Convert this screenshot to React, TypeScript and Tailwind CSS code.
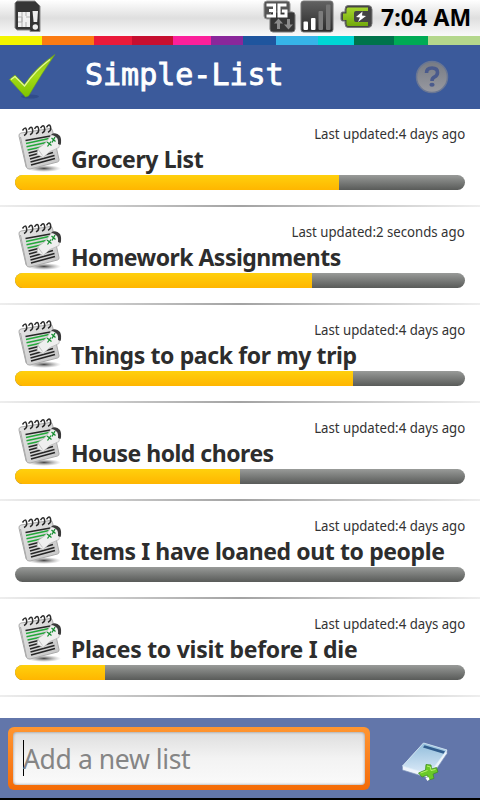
const STRIPES: [number, string][] = [
  [42, '#f3f500'], [52, '#fb7b12'], [38, '#ea1a3a'], [41, '#c60f30'], [38, '#fb209b'], [32, '#8a279b'],
  [33, '#1f559e'], [42, '#36b4e8'], [36, '#00d6d4'], [40, '#00734b'], [34, '#00ab55'], [52, '#b4d78c'],
];

const LISTS = [
  { title: 'Grocery List', updated: '4 days ago', fill: 324, tracking: 'tracking-[-0.4px]' },
  { title: 'Homework Assignments', updated: '2 seconds ago', fill: 297, tracking: 'tracking-[-0.53px]' },
  { title: 'Things to pack for my trip', updated: '4 days ago', fill: 338, tracking: 'tracking-[-0.38px]' },
  { title: 'House hold chores', updated: '4 days ago', fill: 225, tracking: 'tracking-[-0.5px]' },
  { title: 'Items I have loaned out to people', updated: '4 days ago', fill: 0, tracking: 'tracking-[-0.4px]' },
  { title: 'Places to visit before I die', updated: '4 days ago', fill: 90, tracking: 'tracking-[-0.27px]' },
];

function SimIcon() {
  return (
    <svg width="28" height="34" viewBox="0 0 28 34" className="shrink-0">
      <path d="M3 1h18l5 5v25.500H16V30H3L1 28V3z" fill="#363636" stroke="#8a8a8a" strokeWidth="1" />
      <path d="M4 12h12v15H4z" fill="#f2f2f2" />
      <path d="M4 17h4v5H4M16 17h-4M8 12v15M12 12v4M12 22v5" fill="none" stroke="#b0b0b0" strokeWidth="1" />
      <path d="M17 10h8v21h-8z" fill="#333" />
      <path d="M18.500 11h5.500l-.8 11h-3.600z" fill="#eee" />
      <circle cx="21.300" cy="27" r="2.700" fill="#eee" />
    </svg>
  );
}

function NetworkIcon() {
  return (
    <svg width="34" height="34" viewBox="0 0 34 34" className="shrink-0">
      <rect x="1" y="1" width="26" height="18" rx="3" fill="#555" stroke="#999" />
      <rect x="7" y="12" width="25" height="20" rx="3" fill="#363636" stroke="#777" />
      <path d="M3.500 5h8v11h-8M6 10.500h6M23.500 5H16v11h7v-5h-4" fill="none" stroke="#fff" strokeWidth="3" />
      <path d="M15.500 18.500l4.500 5h-3V29h-3v-5.500h-3zM25.500 29.500l-4.500-5h3V19h3v5.500h3z" fill="#8c8c8c" />
    </svg>
  );
}

function SignalIcon() {
  return (
    <svg width="34" height="34" viewBox="0 0 34 34" className="shrink-0">
      <defs>
        <linearGradient id="signal" x2="0" y2="1"><stop stopColor="#626262" /><stop offset="1" stopColor="#292929" /></linearGradient>
      </defs>
      <rect x="1" y="1" width="32" height="31" rx="2.500" fill="url(#signal)" stroke="#777" />
      <rect x="3.500" y="21.500" width="4.500" height="8.500" rx="1" fill="#fff" />
      <rect x="11" y="18" width="4.500" height="12" rx="1" fill="#fff" />
      <rect x="18.500" y="11" width="4.500" height="19" rx="1" fill="#7c7c7c" />
      <rect x="26" y="4.500" width="4.500" height="25.500" rx="1" fill="#757575" />
    </svg>
  );
}

function BatteryIcon() {
  return (
    <svg width="34" height="26" viewBox="0 0 34 26" className="shrink-0">
      <defs>
        <linearGradient id="battery" x2="0" y2="1"><stop stopColor="#a5d52d" /><stop offset="1" stopColor="#72a90b" /></linearGradient>
      </defs>
      <path d="M8 1.500h20q4 0 4 4v14q0 4-4 4H8q-3 0-3-4V17H2.500Q1 17 1 15V10q0-2 1.500-2H5V5.500q0-4 3-4z" fill="#444" stroke="#777" />
      <path d="M8 3.500h20V7H16q-2 0-2 2v7q0 2 2 2h12v4H8q-1.500 0-1.500-2v-4H3V9.500h3.500v-4q0-2 1.500-2z" fill="url(#battery)" />
      <path d="M22.500 7.500L16 13l4 .5-2 4.500 8-6-4-.500z" fill="#fff" />
    </svg>
  );
}

function CheckIcon() {
  return (
    <svg width="50" height="48" viewBox="0 0 50 48" className="shrink-0">
      <defs>
        <linearGradient id="check" x2="0" y2="1"><stop stopColor="#8cc21a" /><stop offset=".5" stopColor="#a5dc17" /><stop offset="1" stopColor="#7fc400" /></linearGradient>
      </defs>
      <ellipse cx="22" cy="43.500" rx="9" ry="2" fill="#233c78" opacity=".45" />
      <path d="M1.500 26.500L7 22l9.500 9.500Q28 14 47 1.500 34 20 20.500 43l-3 1z" fill="url(#check)" stroke="#6da518" strokeWidth=".6" />
      <path d="M3 26.500L7 23.500l9.500 9.500Q28 17 42 6.500" fill="none" stroke="#e2f79a" strokeWidth="1.300" />
    </svg>
  );
}

function HelpIcon() {
  return (
    <svg width="36" height="36" viewBox="0 0 36 36" className="shrink-0">
      <defs>
        <linearGradient id="help" x2="0" y2="1"><stop stopColor="#777b84" /><stop offset="1" stopColor="#9899a0" /></linearGradient>
      </defs>
      <circle cx="18" cy="18" r="15.500" fill="url(#help)" stroke="#697694" strokeWidth="1.500" />
      <path d="M12.500 14q0-5 5.500-5t5.500 4.500q0 3-3 4.500-2.500 1-2.500 4" fill="none" stroke="#4a5a8c" strokeWidth="3.600" />
      <ellipse cx="18" cy="25.800" rx="2.600" ry="2" fill="#4a5a8c" />
    </svg>
  );
}

function NotepadIcon() {
  return (
    <svg width="48" height="52" viewBox="0 0 48 52" className="shrink-0">
      <defs>
        <linearGradient id="paper" x2="1" y2="1"><stop stopColor="#e6e6e6" /><stop offset="1" stopColor="#c6c6c6" /></linearGradient>
        <radialGradient id="shade"><stop stopColor="#333" stopOpacity=".9" /><stop offset="1" stopColor="#888" stopOpacity="0" /></radialGradient>
      </defs>
      <ellipse cx="27" cy="47.500" rx="17" ry="3.500" fill="url(#shade)" />
      <path d="M4 12L33 7.500q2 0 2.500 2L42 38.500q.3 2-1.500 2.500L13 48q-3 .5-4-2.500L2 15q-.3-2.500 2-3z" fill="url(#paper)" stroke="#ababab" />
      <path d="M9.500 46L3.500 16" stroke="#aaa" />
      <path d="M8.500 19.500l25-4.500M14 44l24-6.500M13.500 41l24-6.500M13 38l23-6.500M12 35l22-6M11.500 32l12-3" stroke="#262626" strokeWidth="1.600" />
      <path d="M9 22.500l23-5M9.500 25.700l21-4.500M10.500 29l16-3.500" stroke="#23a83a" strokeWidth="1.600" />
      <path d="M7 14.500q3.500-1.500 2.500-5.500t-4 .5M13 13.700q3.500-1.500 2.500-5.500t-4 .5M19 12.900q3.500-1.500 2.500-5.500t-4 .5M25 12.100q3.500-1.500 2.500-5.500t-4 .5M31 11.300q3.500-1.500 2.500-5.500t-4 .5" fill="none" stroke="#2a2a2a" strokeWidth="1.500" />
      <path d="M20 33.500l1-6 7-5 6-8 4-1 5 5-1 8-9 4-7 6z" fill="#efefef" stroke="#b5b5b5" strokeWidth=".7" />
      <path d="M20.500 27.500l5 7" stroke="#c4c4c4" />
      <path d="M34 13.500q5-3 9 1.500 2 4 .500 9l-2.500-1q.500-5-1.500-6.500-2-2-5.500-3z" fill="#3a3a3a" />
      <path d="M30 21l4.500 3.500m-.5-4l-3.500 5M34.500 17l4 3.500m-.5-4.500l-3 5.500" stroke="#178e31" strokeWidth="1.300" />
    </svg>
  );
}

function AddListIcon() {
  return (
    <svg width="48" height="42" viewBox="0 0 48 42" className="shrink-0">
      <defs>
        <linearGradient id="book" x2="0" y2="1"><stop stopColor="#91bddb" /><stop offset="1" stopColor="#ddebf9" /></linearGradient>
      </defs>
      <path d="M22.500 2L46 9v3.500L29 37.500 1.500 29v-4z" fill="#eef4fc" stroke="#8299bd" strokeWidth=".7" />
      <path d="M22.500 2L46 9 28 33 1.500 25z" fill="url(#book)" stroke="#dcecf8" strokeWidth=".7" />
      <path d="M23.500 4.300L44 10.300l-1.500 2.400L22 6.600z" fill="#315d8e" />
      <path d="M25 23.500l5 .5.500 4 5-1.500 1.500 4.500-5 2 1 4.500-5.500 1.500-1-5-5.500 2-3.500-4 7-3z" fill="#69c927" stroke="#418e25" strokeWidth=".8" />
      <path d="M26 25l3.500 1 .5 3.500 4.500-1M19.500 32l7-2.500" fill="none" stroke="#b8f36b" />
      <path d="M24.500 37l3-1 1 2.500-2 1.500z" fill="#fff" />
    </svg>
  );
}

export default function App() {
  return (
    <div className="flex h-[800px] w-[480px] flex-col overflow-hidden bg-black font-['Noto_Sans',sans-serif]">
      <div className="flex h-9 shrink-0 items-start bg-gradient-to-b from-white via-[#dfdfdf] via-50% to-[#fafafa] pl-3.5 pr-2">
        <SimIcon />
        <div className="ml-auto flex items-start">
          <NetworkIcon />
          <div className="ml-[3px]"><SignalIcon /></div>
          <div className="ml-1.5 mt-1"><BatteryIcon /></div>
          <span className="ml-[7px] w-[91px] whitespace-nowrap text-[23px] font-bold leading-[34px] tracking-[0.1px] text-black">7:04 AM</span>
        </div>
      </div>
      <div className="flex h-[9px] shrink-0">
        {STRIPES.map(([width, color]) => <div key={color} style={{ width, backgroundColor: color }} />)}
      </div>
      <header className="flex h-16 shrink-0 items-center bg-[#3b5a9b] pl-2 pr-[30px]">
        <CheckIcon />
        <h1 className="ml-[27px] pb-1 font-['DejaVu_Sans_Mono',monospace] text-[30px] leading-10 text-white [-webkit-text-stroke:0.9px_white]">Simple-List</h1>
        <div className="ml-auto"><HelpIcon /></div>
      </header>
      <main className="flex h-[609px] shrink-0 flex-col bg-white">
        {LISTS.map((list) => (
          <section key={list.title} className="flex h-[98px] shrink-0 flex-col">
            <div className="flex h-[66px] pl-[17px] pr-[15px] pt-3">
              <NotepadIcon />
              <div className="ml-1.5 flex min-w-0 flex-1 flex-col">
                <span className="mt-[3px] origin-right scale-x-[0.943] self-end whitespace-nowrap text-sm leading-5 text-[#333]">Last updated:{list.updated}</span>
                <h2 className={`-mt-px whitespace-nowrap text-[23px] font-bold leading-8 text-[#2d2d2d] ${list.tracking}`}>{list.title}</h2>
              </div>
            </div>
            <div className="mx-[15px] h-[15px] shrink-0 overflow-hidden rounded-full bg-gradient-to-b from-[#999b99] to-[#595b59]">
              <div className="h-full bg-gradient-to-b from-[#ffd00d] to-[#ffb600]" style={{ width: list.fill }} />
            </div>
            <div className="mt-[15px] h-0.5 bg-gradient-to-r from-[#eee] via-[#a3a3a3] to-[#eee]" />
          </section>
        ))}
      </main>
      <footer className="flex h-20 shrink-0 items-center bg-[#6276aa] pl-2">
        <div className="flex h-[63px] w-[362px] rounded-md bg-gradient-to-b from-[#ff9630] to-[#f46b05] p-[5px]">
          <div className="flex flex-1 items-center rounded-sm bg-gradient-to-b from-[#dedede] via-[#f3f3f3] to-[#fafafa] pl-2.5 shadow-[inset_0_0_3px_#888]">
            <div className="h-9 w-px bg-black" />
            <span className="-ml-px mt-0.5 origin-left scale-x-[0.982] whitespace-nowrap text-[27px] leading-9 tracking-[-0.4px] text-[#858585]">Add a new list</span>
          </div>
        </div>
        <div className="ml-[31px] mt-2"><AddListIcon /></div>
      </footer>
    </div>
  );
}
